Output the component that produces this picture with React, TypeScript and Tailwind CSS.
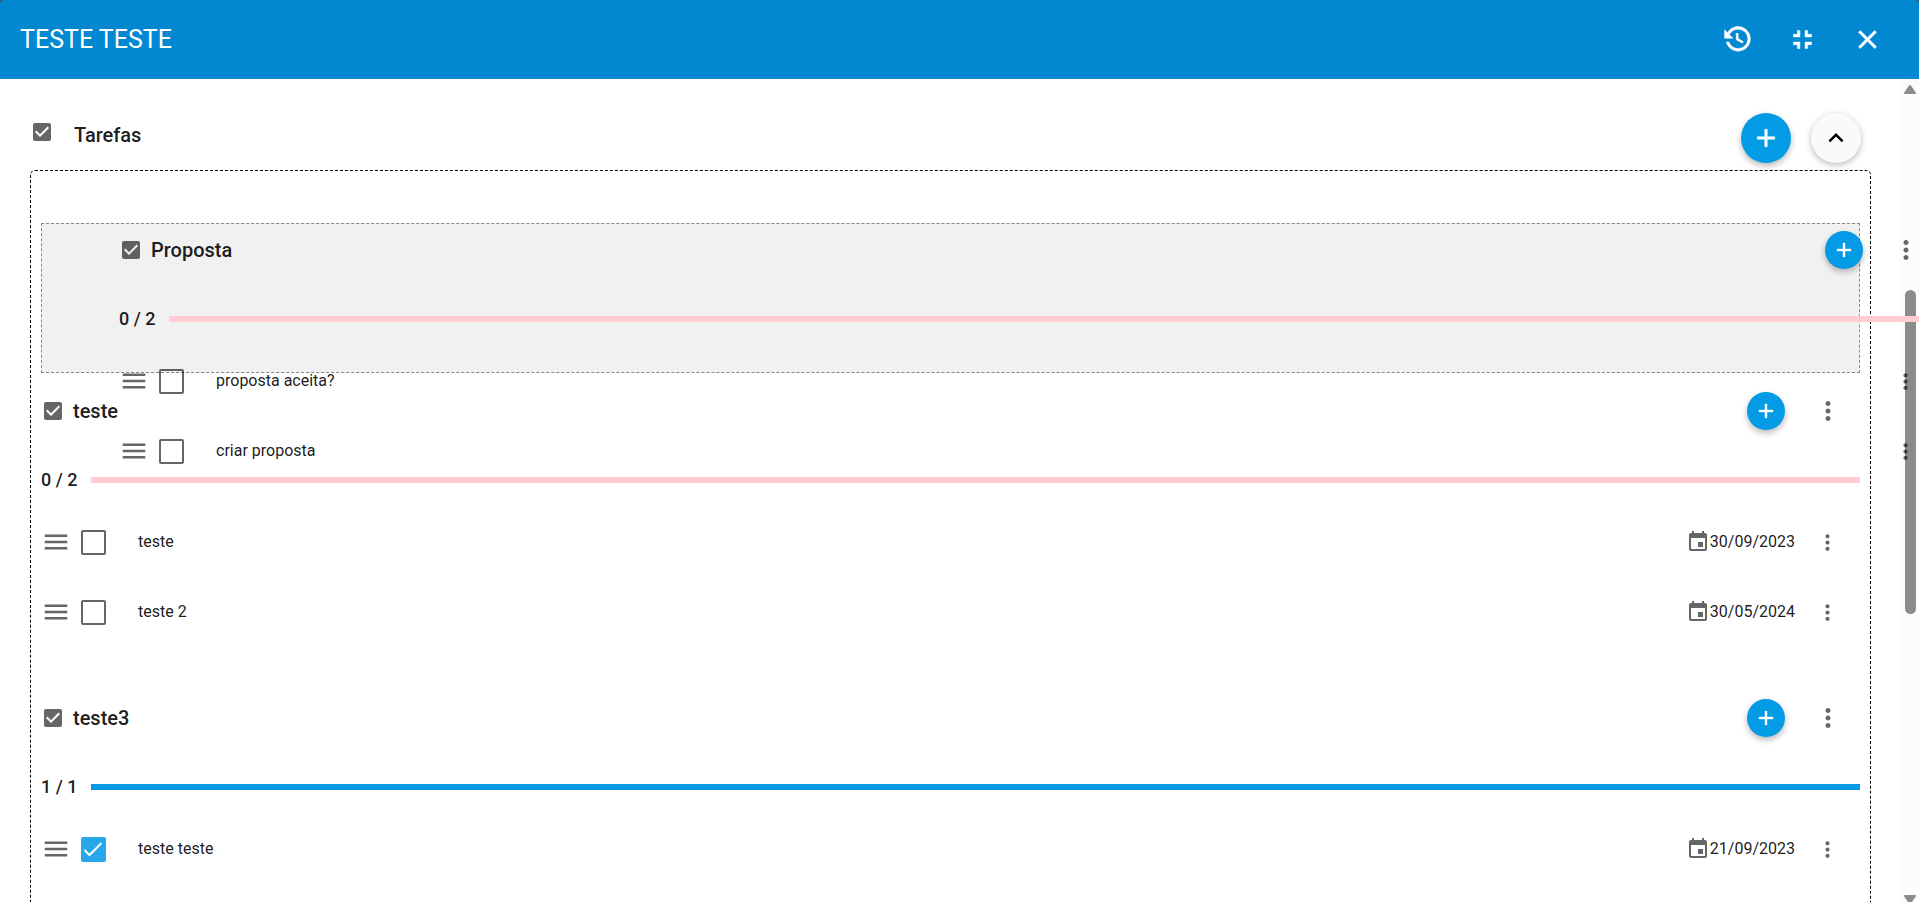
import React, { useState } from 'react';
import { MdCheckBox, MdEvent, MdKeyboardArrowUp, MdMenu, MdMoreVert } from 'react-icons/md';
import clsx from 'clsx';

interface Task {
  id: string;
  title: string;
  done: boolean;
  date?: string;
}

interface TaskList {
  id: string;
  name: string;
  tasks: Task[];
}

const draggedList: TaskList = {
  id: 'proposta',
  name: 'Proposta',
  tasks: [
    { id: 'p1', title: 'proposta aceita?', done: false },
    { id: 'p2', title: 'criar proposta', done: false },
  ],
};

const lists: TaskList[] = [
  {
    id: 'teste',
    name: 'teste',
    tasks: [
      { id: 't1', title: 'teste', done: false, date: '30/09/2023' },
      { id: 't2', title: 'teste 2', done: false, date: '30/05/2024' },
    ],
  },
  {
    id: 'teste3',
    name: 'teste3',
    tasks: [{ id: 't3', title: 'teste teste', done: true, date: '21/09/2023' }],
  },
];

const icons = {
  history:
    'M11,7V12.11L15.71,14.9L16.5,13.62L12.5,11.25V7M12.5,2C8.97,2 5.91,3.92 4.27,6.77L2,4.5V11H8.5L5.75,8.25C6.96,5.73 9.5,4 12.5,4A7.5,7.5 0 0,1 20,11.5A7.5,7.5 0 0,1 12.5,19C9.23,19 6.47,16.91 5.44,14H3.34C4.44,18.03 8.11,21 12.5,21C17.74,21 22,16.75 22,11.5A9.5,9.5 0 0,0 12.5,2Z',
  fullscreenExit: 'M14,14H19V16H16V19H14V14M5,14H10V19H8V16H5V14M8,5H10V10H5V8H8V5M19,8V10H14V5H16V8H19Z',
  close:
    'M19,6.41L17.59,5L12,10.59L6.41,5L5,6.41L10.59,12L5,17.59L6.41,19L12,13.41L17.59,19L19,17.59L13.41,12L19,6.41Z',
  plus: 'M19,13H13V19H11V13H5V11H11V5H13V11H19V13Z',
};

function Icon({ name, className }: { name: keyof typeof icons; className: string }) {
  return (
    <svg viewBox="0 0 24 24" className={className} fill="currentColor" stroke="currentColor" strokeWidth="0.4">
      <path d={icons[name]} />
    </svg>
  );
}

function HeaderButton({ label, icon }: { label: string; icon: keyof typeof icons }) {
  return (
    <button type="button" aria-label={label} className="size-[45px] flex items-center justify-center">
      <Icon name={icon} className="size-[31px]" />
    </button>
  );
}

function TaskRow({ task }: { task: Task }) {
  const [done, setDone] = useState(task.done);

  return (
    <li className="h-[62px] flex items-center">
      <button type="button" aria-label="Mover tarefa" className="text-black/60">
        <MdMenu className="size-[30px]" />
      </button>
      <label className="ml-[10px] flex items-center gap-8 text-[16px] leading-6">
        <span className="size-[25px] grid">
          <input
            type="checkbox"
            checked={done}
            onChange={() => setDone(!done)}
            className="col-start-1 row-start-1 size-[25px] appearance-none rounded-[2px] border-2 border-black/60 checked:border-0 checked:bg-[#26a7ea]"
          />
          {done && (
            <svg viewBox="0 0 25 25" className="col-start-1 row-start-1 size-[25px] pointer-events-none" fill="none" stroke="white" strokeWidth="2">
              <path d="M3.5 13L8.5 18L20.5 6" />
            </svg>
          )}
        </span>
        {task.title}
      </label>
      <div className="ml-auto mr-[10px] flex items-center">
        {task.date && (
          <span className="mr-[10px] flex items-center text-[16px] leading-6">
            <MdEvent className="size-6 text-black/60" />
            {task.date}
          </span>
        )}
        <button type="button" aria-label="Opções da tarefa" className="w-[45px] flex justify-center text-black/60">
          <MdMoreVert className="size-[25px]" />
        </button>
      </div>
    </li>
  );
}

function TaskSection({ list }: { list: TaskList }) {
  const done = list.tasks.filter((t) => t.done).length;
  const total = list.tasks.length;

  return (
    <section>
      <div className="h-[76px] flex items-center">
        <MdCheckBox className="size-6 text-black/60" />
        <h3 className="ml-2 text-[20px] leading-6 font-medium">{list.name}</h3>
        <div className="ml-auto mr-[10px] flex items-center gap-5">
          <button
            type="button"
            aria-label="Adicionar tarefa"
            className="size-[38px] rounded-full bg-[#039be5] text-white flex items-center justify-center shadow-[0_3px_6px_rgba(0,0,0,0.28)]"
          >
            <Icon name="plus" className="size-6" />
          </button>
          <button type="button" aria-label="Opções da lista" className="w-[45px] flex justify-center text-black/60">
            <MdMoreVert className="size-[30px]" />
          </button>
        </div>
      </div>
      <div className="h-[62px] flex items-center">
        <span className="w-[50px] shrink-0 text-[18px] leading-6 font-medium">
          {done} / {total}
        </span>
        <div className="h-[6px] flex-1 bg-[#ffcdd2]">
          <div className="h-full bg-[#039be5]" style={{ width: `${(done / total) * 100}%` }} />
        </div>
      </div>
      <ul className="flex flex-col gap-2">
        {list.tasks.map((task) => (
          <TaskRow key={task.id} task={task} />
        ))}
      </ul>
    </section>
  );
}

function Scrollbar() {
  return (
    <div className="w-[18px] shrink-0 bg-[#fcfcfc] flex flex-col items-center overflow-hidden text-[#8b8b8b]">
      <svg viewBox="0 0 12 9" className="mt-[6px] w-3 h-[9px] shrink-0" fill="currentColor">
        <path d="M5 .5Q6 -.4 7 .5L11.8 7.5Q12.2 9 11 9H1Q-.2 9 .2 7.5Z" />
      </svg>
      <div className="grow-[196]" />
      <div className="grow-[324] w-[11px] rounded-full bg-[#8b8b8b]" />
      <div className="grow-[281]" />
      <svg viewBox="0 0 12 7" className="w-3 h-[7px] shrink-0" fill="currentColor">
        <path d="M1 0H11Q12.2 0 11.8 1.5L8 7H4L.2 1.5Q-.2 0 1 0Z" />
      </svg>
    </div>
  );
}

export default function App() {
  const [open, setOpen] = useState(true);

  return (
    <div className="h-screen overflow-hidden flex flex-col bg-white text-black/90 font-[Roboto,'Liberation_Sans',sans-serif]">
      <div className="bg-[#444] shrink-0">
        <header className="h-[79px] pl-5 pr-[29px] flex items-center justify-between rounded-t-[3px] bg-[#0288d1] text-white">
          <h1 className="text-[25px] leading-8">TESTE TESTE</h1>
          <div className="flex items-center gap-5">
            <HeaderButton label="Histórico" icon="history" />
            <HeaderButton label="Sair da tela cheia" icon="fullscreenExit" />
            <HeaderButton label="Fechar" icon="close" />
          </div>
        </header>
      </div>

      <div className="flex-1 min-h-0 flex">
        <main className="flex-1 min-w-0 px-[30px] pt-[34px]">
          <div className="h-[50px] mb-[7px] flex">
            <MdCheckBox className="mt-[7px] size-6 text-black/60" />
            <h2 className="ml-5 text-[20px] leading-[45px] font-medium">Tarefas</h2>
            <div className="ml-auto mr-[10px] flex gap-5">
              <button
                type="button"
                aria-label="Adicionar lista"
                className="size-[50px] rounded-full bg-[#039be5] text-white flex items-center justify-center shadow-[0_3px_6px_rgba(0,0,0,0.28)]"
              >
                <Icon name="plus" className="size-[30px]" />
              </button>
              <button
                type="button"
                aria-label="Recolher"
                onClick={() => setOpen(!open)}
                className="size-[50px] rounded-full bg-[#fafafa] text-black flex items-center justify-center shadow-[0_2px_6px_rgba(0,0,0,0.28)]"
              >
                <MdKeyboardArrowUp className={clsx('size-[30px]', !open && 'rotate-180')} />
              </button>
            </div>
          </div>

          {open && (
            <div className="relative px-[10px] pt-[52px] pb-10 border border-dashed border-black rounded-[5px]">
              {/* drop slot for the list being dragged */}
              <div className="h-[150px] border border-dashed border-[#888] bg-[#f1f1f1]" />
              <div className="flex flex-col gap-[37px]">
                {lists.map((list) => (
                  <TaskSection key={list.id} list={list} />
                ))}
              </div>
              <div className="absolute z-10 top-[41px] left-[88px] -right-[68px]">
                <TaskSection list={draggedList} />
              </div>
            </div>
          )}
        </main>
        <Scrollbar />
      </div>
    </div>
  );
}
